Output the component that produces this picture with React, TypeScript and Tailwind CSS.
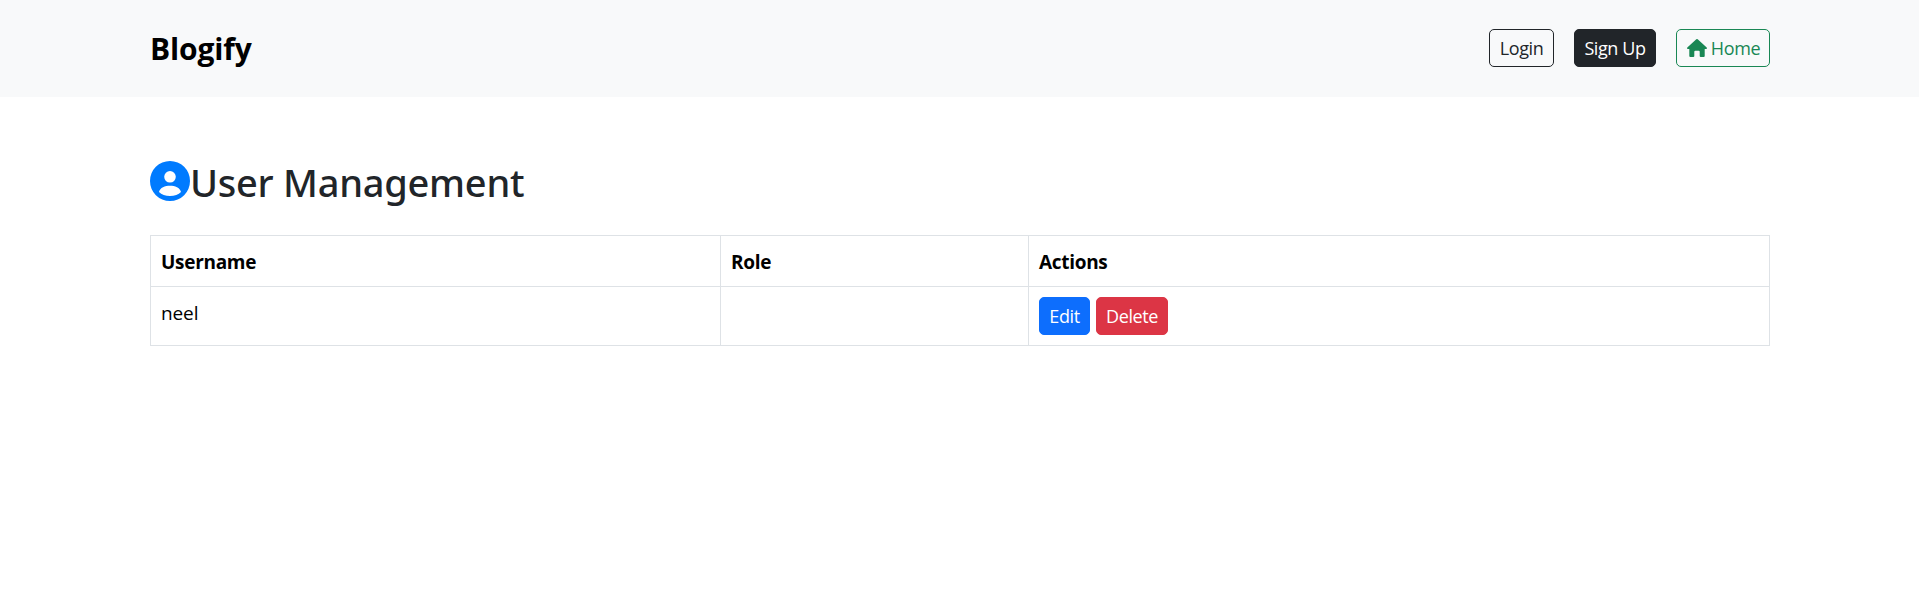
const btn = "flex h-[38px] items-center justify-center rounded-[5px] border text-[18px] leading-none tracking-[-0.4px]";

export default function App() {
  return (
    <div className="min-h-[613px] bg-white font-['Open_Sans',sans-serif] text-black">
      <nav className="flex h-[97px] items-center justify-between bg-[#f8f9fa] pl-[150px] pr-[149px] pb-px">
        <a className="pt-[2px] text-[30px] font-bold leading-none tracking-[-0.15px]">Blogify</a>
        <div className="flex gap-5">
          <button className={`${btn} w-[65px] border-[#212529] text-[#212529]`}>Login</button>
          <button className={`${btn} w-[82px] border-[#212529] bg-[#212529] text-white`}>Sign Up</button>
          <button className={`${btn} w-[94px] gap-[4px] border-[#198754] text-[#198754]`}>
            <svg viewBox="0 0 20 18" className="ml-px h-[18px] w-5" fill="currentColor">
              <path d="M9.300 .3Q10-.3 10.700 .3L19.700 8.500Q20.400 9.700 19.200 10H17.700V17Q17.700 18 16.700 18H13.700Q12.700 18 12.700 17V12.800Q12.700 11.800 11.700 11.800H8.300Q7.300 11.800 7.300 12.800V17Q7.300 18 6.300 18H3.300Q2.300 18 2.300 17V10H.8Q-.4 9.700 .3 8.500Z" />
            </svg>
            <span>Home</span>
          </button>
        </div>
      </nav>
      <main className="pl-[150px] pr-[149px] pt-[63px]">
        <h1 className="flex h-[48px] items-center font-['Noto_Sans',sans-serif] text-[38px] font-medium leading-none tracking-[-0.25px] text-[#212529]">
          <svg viewBox="0 0 40 40" className="mb-[7px] size-10" fill="#007bff">
            <path fillRule="evenodd" d="M20 0a20 20 0 1 0 0 40a20 20 0 1 0 0-40M20 10a5.800 5.800 0 1 1 0 11.600a5.800 5.800 0 1 1 0-11.600M9 31C10 26.500 15 24.700 20 24.700S30 26.500 31 31C28.500 33.600 24.500 35 20 35S11.500 33.600 9 31" />
          </svg>
          <span className="mb-[4px]">User Management</span>
        </h1>
        <table className="mt-[27px] w-full table-fixed border-collapse text-left text-[19px] leading-[30px] [&_td]:border [&_td]:border-[#dee2e6] [&_td]:px-[10px] [&_td]:align-top [&_th]:border [&_th]:border-[#dee2e6] [&_th]:px-[10px] [&_th]:pt-[2px]">
          <colgroup>
            <col className="w-[570px]" />
            <col className="w-[308px]" />
            <col />
          </colgroup>
          <thead>
            <tr className="h-[51px] tracking-[-0.3px]">
              <th>Username</th>
              <th>Role</th>
              <th>Actions</th>
            </tr>
          </thead>
          <tbody>
            <tr className="h-[59px]">
              <td className="pt-[11px] tracking-[-0.1px]">neel</td>
              <td />
              <td className="pt-[10px]">
                <div className="flex gap-[6px]">
                  <button className={`${btn} w-[51px] border-[#0d6efd] bg-[#0d6efd] text-white`}>Edit</button>
                  <button className={`${btn} w-[72px] border-[#dc3545] bg-[#dc3545] text-white`}>Delete</button>
                </div>
              </td>
            </tr>
          </tbody>
        </table>
      </main>
    </div>
  );
}
